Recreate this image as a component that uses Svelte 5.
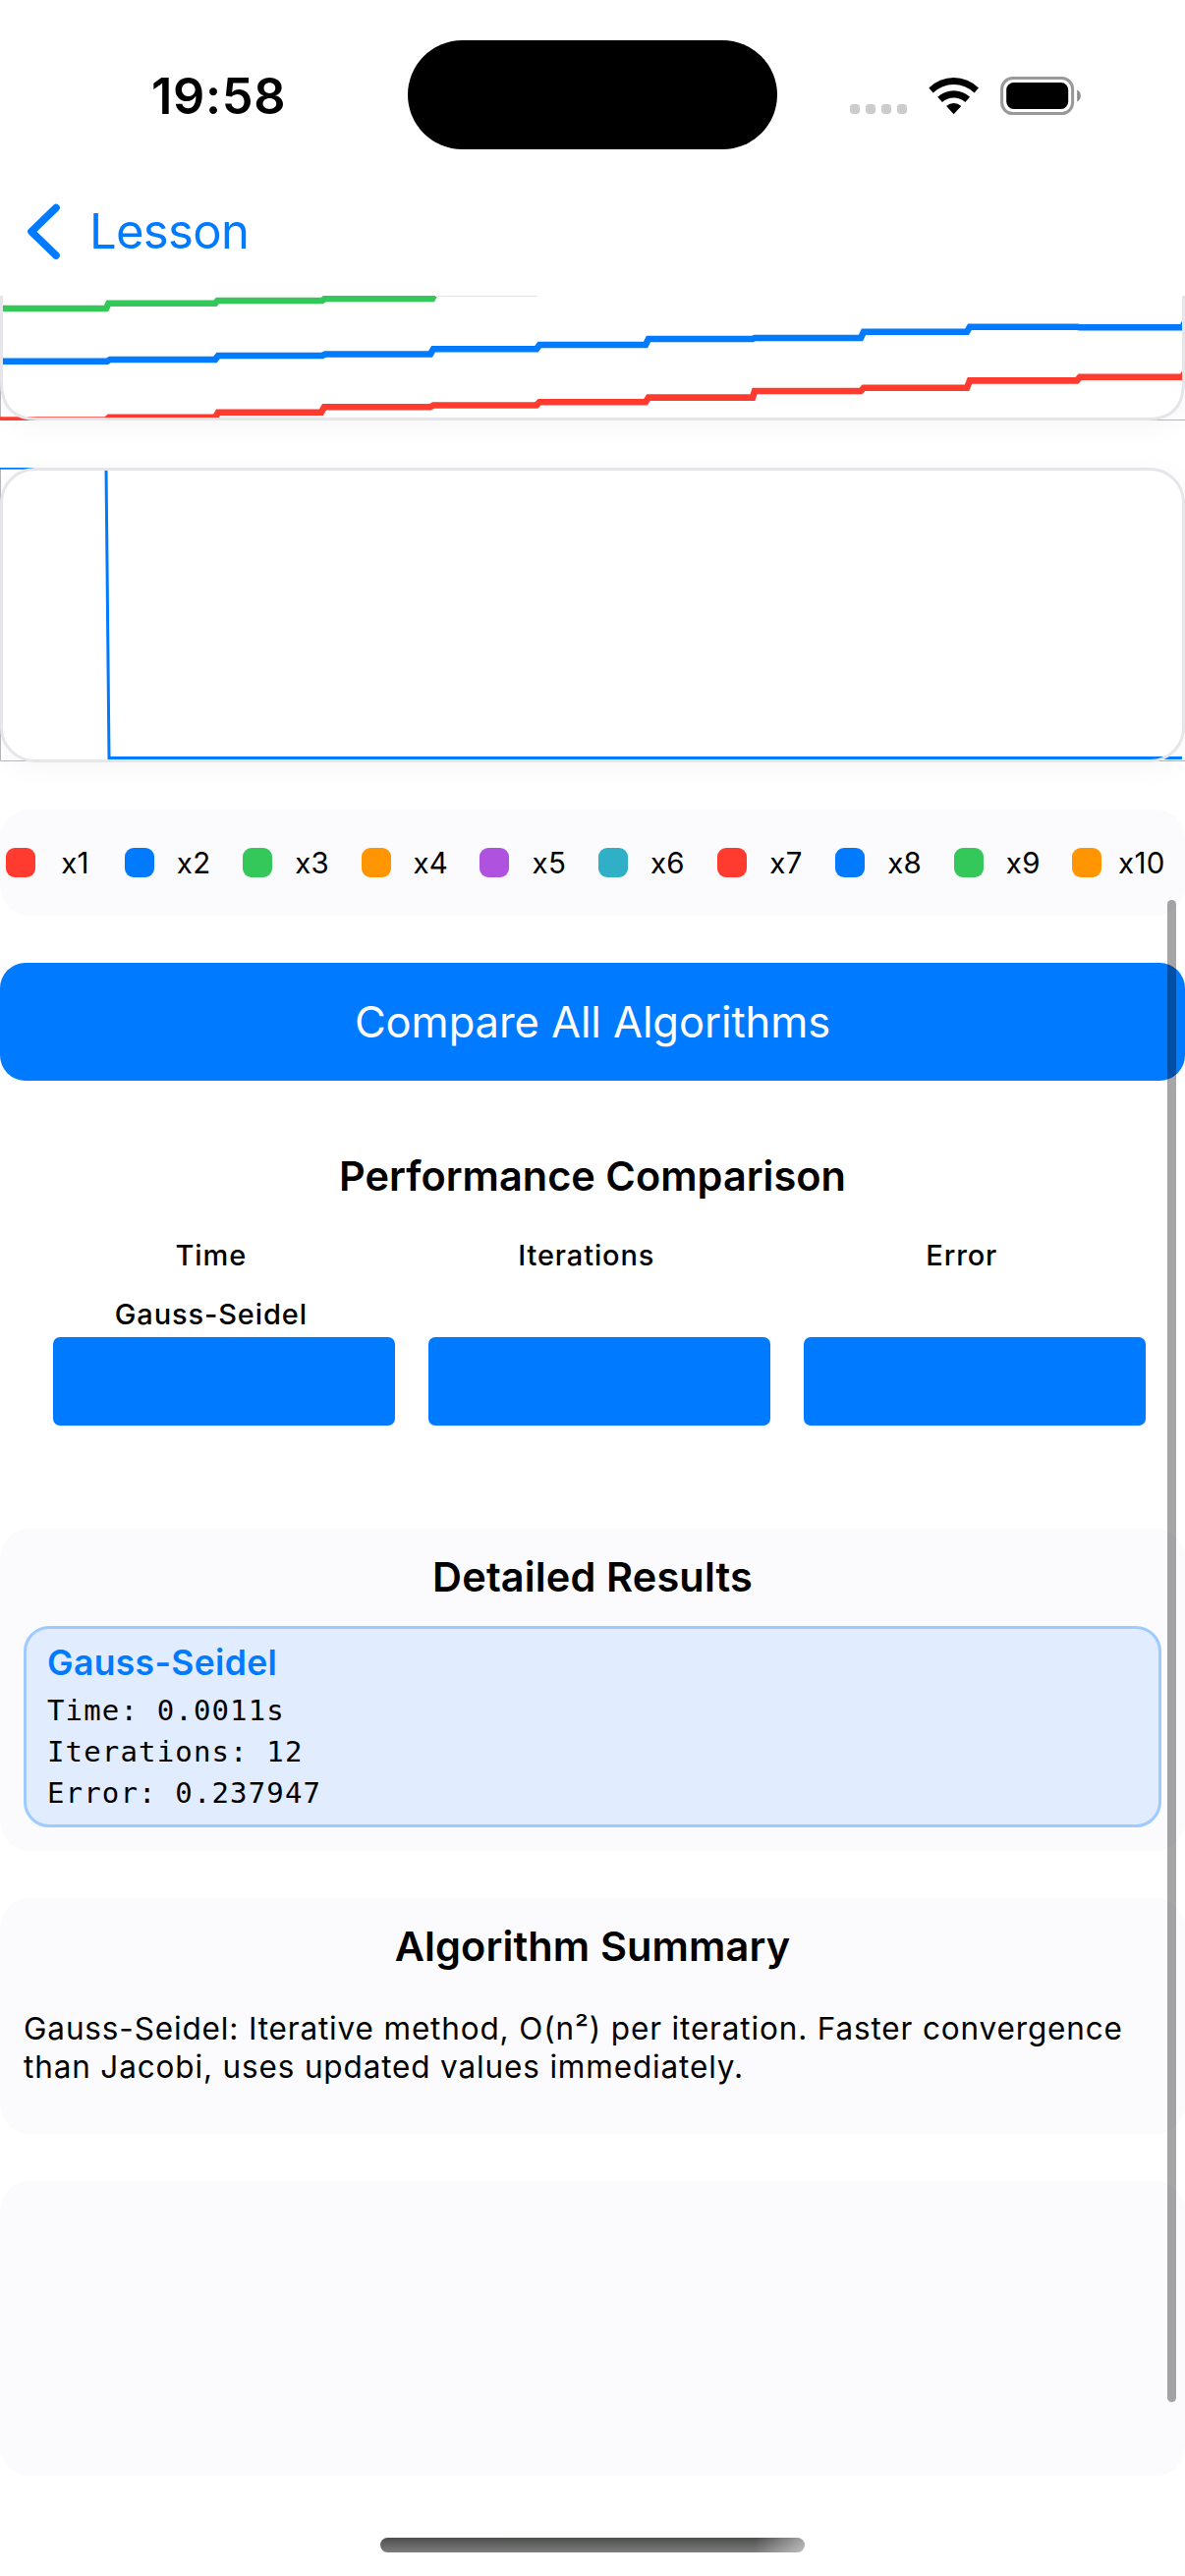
<script>
  const palette = ['#ff3b30', '#007aff', '#34c759', '#ff9500', '#af52de', '#30b0c7'];
  const legend = Array.from({ length: 10 }, (_, i) => ({
    label: `x${i + 1}`,
    color: palette[i % palette.length]
  }));

  const metrics = [
    { title: 'Time', name: 'Gauss-Seidel' },
    { title: 'Iterations', name: '' },
    { title: 'Error', name: '' }
  ];

  const series = [
    {
      color: '#34c759',
      points: '0,13 108,13 110.5,7.8 219,7.8 221.5,5 328,5 330.5,3 440,3 444,-5'
    },
    {
      color: '#007aff',
      points:
        '0,66.8 109,66.8 112,65 219,65 222,61 328,61 331,59.5 438,59.5 441,54.3 546,54.3 549,50 657,50 660,44 766,44 768,43 876,43 879,36.8 984,36.8 987,31.8 1096,31.8 1099,32.3 1203,32.3 1206,27'
    },
    {
      color: '#ff3b30',
      points:
        '-4,126.5 108,126.5 111,123.7 219,123.7 222,118.7 327,118.7 330,113.3 438,113.3 441,111.5 546,111.5 549,108.3 657,108.3 660,103.6 766,103.6 768,97 876,97 879,93.8 984,93.8 987,86.4 1096,86.4 1099,82.8 1203,82.8 1206,78'
    }
  ];
</script>

<div class="screen">
  <header class="status">
    <div class="clock"><span>19:58</span></div>
    <div class="island"></div>
    <svg class="indicators" width="240" height="50" viewBox="0 0 240 50">
      <g fill="#cccccc">
        <rect x="4" y="33" width="10" height="10" rx="3.4" />
        <rect x="20" y="33" width="10" height="10" rx="3.4" />
        <rect x="36" y="33" width="10" height="10" rx="3.4" />
        <rect x="52" y="33" width="10" height="10" rx="3.4" />
      </g>
      <path
        d="M84.3 16.4 A36 36 0 0 1 135 16.4 L130.6 21.6 A30 30 0 0 0 88.7 21.6 Z"
        fill="#000"
      />
      <path d="M93.2 25.7 A24.5 24.5 0 0 1 126.1 25.7 L121.3 31 A17 17 0 0 0 98 31 Z" fill="#000" />
      <path d="M102.1 34.9 A11.5 11.5 0 0 1 117.2 34.9 L109.6 43.3 Z" fill="#000" />
      <rect x="158.6" y="6.6" width="72" height="36" rx="11" fill="none" stroke="#999" stroke-width="3" />
      <rect x="163.2" y="11" width="63" height="27" rx="7.5" fill="#000" />
      <path d="M235.2 18.6 C240 20.4 240 28.8 235.2 30.6 Z" fill="#8c8c8c" />
    </svg>
  </header>

  <nav class="nav">
    <svg width="42" height="66" viewBox="0 0 42 66">
      <path d="M32 9.5 L7 33.7 L32 58" fill="none" stroke="#007aff" stroke-width="7.6" stroke-linecap="round" stroke-linejoin="round" />
    </svg>
    <span class="back"><span>Lesson</span></span>
  </nav>

  <main class="scroll">
    <section class="chart first">
      <svg width="1206" height="127" viewBox="0 0 1206 127">
        <path d="M.5 88 V126.5 H1206" fill="none" stroke="#b5b5ba" />
        {#each series as s}
          <polyline points={s.points} fill="none" stroke={s.color} stroke-width="6.6" />
        {/each}
        <path d="M443 .5 H547" stroke="#cdf1d6" />
        <path
          d="M1.5 -10 V88 C1.5 113 14 125.5 38 125.5 H1168 C1192 125.5 1204.5 113 1204.5 88 V-10"
          fill="none"
          stroke="#e5e5ea"
          stroke-width="3"
        />
      </svg>
    </section>

    <section class="chart second">
      <svg width="1206" height="300" viewBox="0 0 1206 300">
        <path d="M.5 0 V298.5 H1206" fill="none" stroke="#b5b5ba" />
        <polyline points="0,.3 108,.3 111,295.6 1203,295.6" fill="none" stroke="#007aff" stroke-width="3" />
        <rect x="1.5" y="1.5" width="1203" height="297" rx="34" fill="none" stroke="#e5e5ea" stroke-width="3" />
      </svg>
    </section>

    <ul class="card legend">
      {#each legend as item}
        <li><i style:background={item.color}></i><span>{item.label}</span></li>
      {/each}
    </ul>

    <button class="compare"><span>Compare All Algorithms</span></button>

    <section class="performance">
      <h2>Performance Comparison</h2>
      <div class="columns">
        {#each metrics as m}
          <div class="metric">
            <span class="label">{m.title}</span>
            <span class="label name">{m.name}</span>
            <div class="bar"></div>
          </div>
        {/each}
      </div>
    </section>

    <section class="card details">
      <h2 class="wide">Detailed Results</h2>
      <div class="result">
        <h3>Gauss-Seidel</h3>
        <p>Time: 0.0011s</p>
        <p>Iterations: 12</p>
        <p>Error: 0.237947</p>
      </div>
    </section>

    <section class="card summary">
      <h2 class="wide">Algorithm Summary</h2>
      <p>Gauss-Seidel: Iterative method, O(n²) per iteration. Faster convergence<br />than Jacobi, uses updated values immediately.</p>
    </section>

    <section class="card empty"></section>
  </main>

  <div class="scrollbar"></div>
  <div class="home"></div>
</div>

<style>
  :global(body) {
    margin: 0;
    background: #fff;
  }
  .screen {
    position: relative;
    width: 1206px;
    height: 2622px;
    overflow: hidden;
    background: #fff;
    color: #000;
    font-family: Inter, 'Liberation Sans', sans-serif;
  }
  h2,
  h3,
  p,
  ul {
    margin: 0;
    padding: 0;
  }
  .status {
    display: grid;
    grid-template-columns: 415px 376px 1fr;
    height: 193px;
    box-sizing: border-box;
    padding-top: 41px;
  }
  .clock {
    padding: 27px 0 0 154px;
    font-size: 50.5px;
    line-height: 60px;
    font-weight: 600;
    letter-spacing: 0.7px;
  }
  .island {
    height: 111px;
    border-radius: 56px;
    background: #000;
  }
  .indicators {
    margin: 32px 0 0 70px;
  }
  .nav {
    display: flex;
    align-items: center;
    height: 108px;
    box-sizing: border-box;
    padding: 0 0 25px 25px;
  }
  .back {
    margin: 2px 0 0 24px;
    font-size: 49px;
    line-height: 60px;
    letter-spacing: -0.7px;
    color: #007aff;
  }
  .scroll {
    display: flex;
    flex-direction: column;
    gap: 48px;
    height: 2321px;
    overflow: hidden;
  }
  .chart {
    flex: none;
    background: #fff;
    border-radius: 36px;
    box-shadow: 0 6px 30px rgba(0, 0, 0, 0.04);
  }
  .first {
    height: 127px;
    border-radius: 0 0 36px 36px;
  }
  .second {
    height: 300px;
  }
  .chart svg {
    display: block;
  }
  .card {
    flex: none;
    box-sizing: border-box;
    border-radius: 30px;
    background: #fbfbfd;
  }
  .legend {
    display: flex;
    height: 108px;
    align-items: center;
    list-style: none;
  }
  .legend li {
    display: flex;
    width: 120.6px;
    box-sizing: border-box;
    align-items: center;
    padding-left: 6px;
  }
  .legend i {
    width: 30px;
    height: 30px;
    border-radius: 9px;
  }
  .legend span {
    width: 81px;
    text-align: center;
    font-size: 29.5px;
    line-height: 36px;
    letter-spacing: 0.3px;
  }
  .compare {
    flex: none;
    height: 120px;
    border: 0;
    border-radius: 26px;
    background: #007aff;
    color: #fff;
    font: 400 43.5px/52px Inter, sans-serif;
    letter-spacing: -0.08px;
  }
  h2 {
    font-size: 41.5px;
    line-height: 50px;
    font-weight: 600;
    text-align: center;
  }
  h2.wide {
    letter-spacing: 0.13px;
  }
  .performance {
    flex: none;
    height: 360px;
    box-sizing: border-box;
    padding-top: 24px;
  }
  .columns {
    display: grid;
    grid-template-columns: repeat(3, 347.6px);
    gap: 34.4px;
    padding: 38px 0 0 54px;
  }
  .metric {
    display: flex;
    flex-direction: column;
  }
  .label {
    height: 36px;
    padding-right: 26px;
    text-align: center;
    font-size: 29px;
    line-height: 36px;
    font-weight: 500;
    letter-spacing: 0.87px;
  }
  .name {
    margin: 24px 0 5px;
  }
  .bar {
    height: 90px;
    border-radius: 7px;
    background: #007aff;
  }
  .details {
    height: 328px;
    padding: 24px 24px 0;
  }
  .result {
    height: 205px;
    box-sizing: border-box;
    margin-top: 25px;
    padding: 13px 21px;
    border: 3px solid #9dcaff;
    border-radius: 26px;
    background: #e1edfe;
  }
  h3 {
    margin-bottom: 5px;
    color: #007aff;
    font-size: 35.5px;
    line-height: 44px;
    font-weight: 600;
    letter-spacing: 0.35px;
  }
  .result p {
    font: 400 29px/42px 'DejaVu Sans Mono', monospace;
    letter-spacing: 1.15px;
  }
  .summary {
    height: 240px;
    padding: 24px 24px 0;
  }
  .summary p {
    margin-top: 39px;
    font-size: 31.5px;
    line-height: 39px;
    letter-spacing: 0.85px;
    white-space: nowrap;
  }
  .empty {
    height: 300px;
  }
  .scrollbar {
    position: absolute;
    right: 9px;
    top: 916px;
    width: 9px;
    height: 1529px;
    border-radius: 5px;
    background: rgba(0, 0, 0, 0.35);
  }
  .home {
    position: absolute;
    left: 387px;
    top: 2583px;
    width: 432px;
    height: 15px;
    border-radius: 8px;
    background:
      linear-gradient(100deg, transparent 88%, rgba(255, 255, 255, 0.5) 100%),
      linear-gradient(#4d4f4d, #7c7c7c);
  }
</style>
